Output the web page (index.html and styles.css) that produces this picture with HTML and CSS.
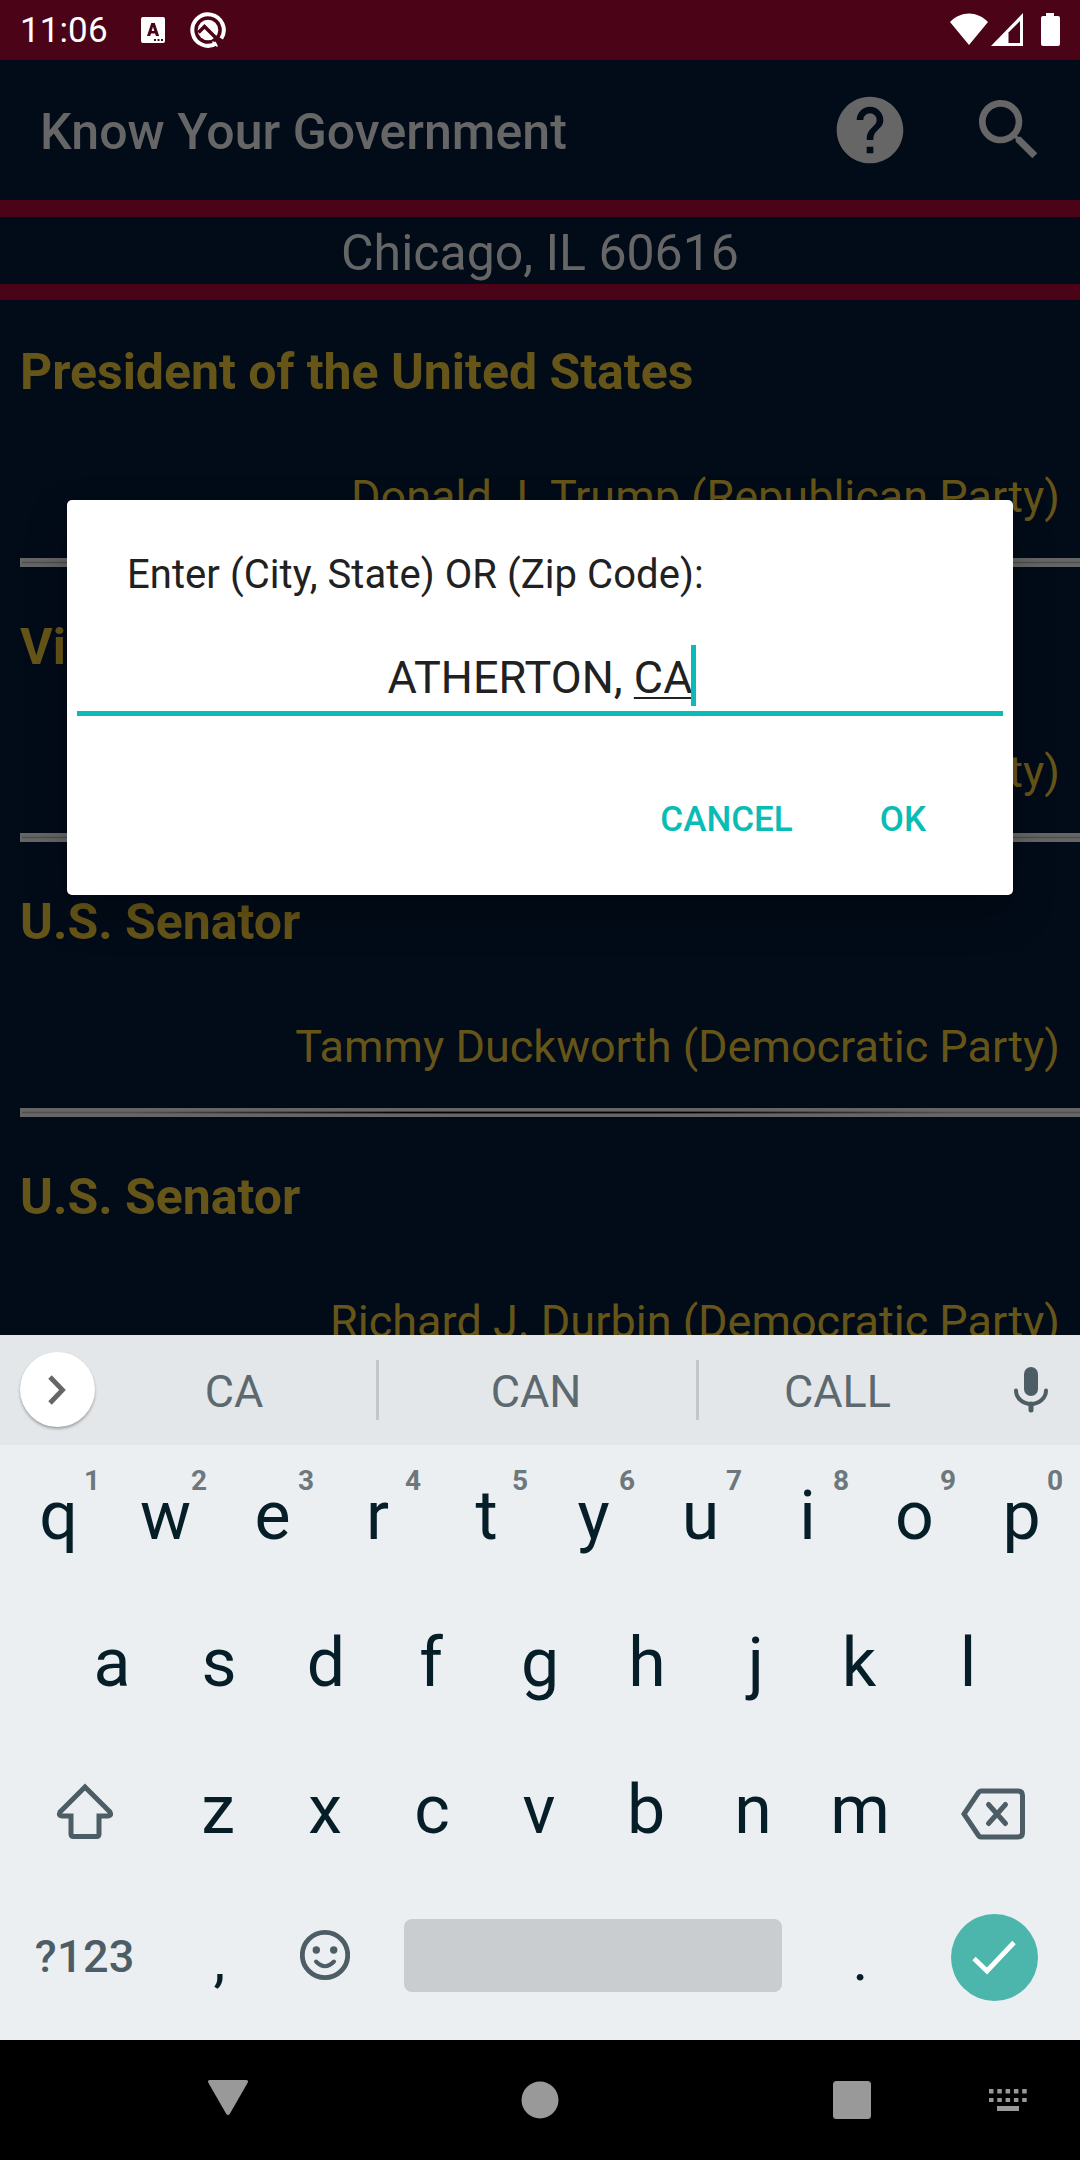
FILE: index.html
```html
<!DOCTYPE html>
<html lang="en">
<head>
<meta charset="utf-8">
<title>Know Your Government</title>
<link rel="stylesheet" href="styles.css">
</head>
<body>
<div class="screen">
  <header class="status">
    <span class="clock">11:06</span>
    <svg class="ic-lang" width="24" height="26" viewBox="0 0 24 26"><path fill-rule="evenodd" fill="#fff" d="M2 0h20a2 2 0 0 1 2 2v22a2 2 0 0 1-2 2H2a2 2 0 0 1-2-2V2a2 2 0 0 1 2-2zM10.300 6L6 19h3.200l.8-2.600h4.100l.8 2.600h3.200L13.800 6zM12 9.800l1.300 4.200h-2.600zM13 22v2h2v-2zM16.500 22v2h2v-2zM20 22v2h2v-2z"/></svg>
    <svg class="ic-q" width="36" height="38" viewBox="0 0 36 38" fill="none"><path d="M26.500 32.300A15.700 15.700 0 1 1 31.300 27.500" stroke="#fff" stroke-width="4"/><circle cx="18" cy="19" r="10.300" fill="#fff"/><path d="M8.500 21.500l6-6L30 31" stroke="#4b0417" stroke-width="3.500"/><path d="M22.500 30.500l5 5" stroke="#fff" stroke-width="1.500"/></svg>
    <svg class="ic-net" width="112" height="34" viewBox="0 0 112 34"><path fill="#fff" d="M0 9C11-2.500 27-2.500 38 9L19 32zM41 33L73 0v33z"/><path d="M58.500 19.500L70 8v22H58.500z" fill="#4b0417"/><path fill="#fff" d="M96 0h8v3h4a2 2 0 0 1 2 2v26a2 2 0 0 1-2 2H93a2 2 0 0 1-2-2V5a2 2 0 0 1 2-2h3z"/></svg>
  </header>
  <main class="app">
    <div class="appbar">
      <h1>Know Your Government</h1>
      <svg class="ic-help" width="80" height="80" viewBox="0 0 24 24" fill="#666"><path d="M12 2C6.480 2 2 6.480 2 12s4.480 10 10 10 10-4.480 10-10S17.520 2 12 2zm1 17h-2v-2h2v2zm2.070-7.750l-.9.920C13.450 12.900 13 13.500 13 15h-2v-.5c0-1.100.45-2.100 1.170-2.830l1.240-1.260c.37-.36.59-.86.59-1.410 0-1.100-.9-2-2-2s-2 .9-2 2H8c0-2.210 1.790-4 4-4s4 1.790 4 4c0 .88-.36 1.680-.93 2.250z"/></svg>
      <svg class="ic-search" width="80" height="80" viewBox="0 0 24 24" fill="#666"><path d="M15.500 14h-.79l-.28-.27C15.410 12.590 16 11.110 16 9.500 16 5.910 13.090 3 9.500 3S3 5.910 3 9.500 5.910 16 9.500 16c1.610 0 3.090-.59 4.230-1.570l.27.28v.79l5 4.990L20.490 19l-4.990-5zm-6 0C7.010 14 5 11.990 5 9.500S7.010 5 9.500 5 14 7.010 14 9.500 11.990 14 9.500 14z"/></svg>
    </div>
    <div class="place">Chicago, IL 60616</div>
    <ul class="officials">
      <li><b>President of the United States</b><span>Donald J. Trump (Republican Party)</span><i class="rule"></i></li>
      <li><b>Vice President of the United States</b><span>Mike Pence (Republican Party)</span><i class="rule"></i></li>
      <li><b>U.S. Senator</b><span>Tammy Duckworth (Democratic Party)</span><i class="rule"></i></li>
      <li><b>U.S. Senator</b><span>Richard J. Durbin (Democratic Party)</span><i class="rule"></i></li>
    </ul>
  </main>
  <section class="dialog">
    <p class="message">Enter (City, State) OR (Zip Code):</p>
    <div class="field"><span class="value">ATHERTON, <span class="composing">CA</span></span><i class="caret"></i></div>
    <div class="actions"><span>CANCEL</span><span>OK</span></div>
  </section>
  <section class="keyboard">
    <div class="suggest">
      <div class="more"><svg width="20" height="30" viewBox="0 0 20 30"><path d="M2 2l12.500 13L2 28" fill="none" stroke="#666" stroke-width="4.800"/></svg></div>
      <span class="s1">CA</span><i></i><span class="s2">CAN</span><i></i><span class="s3">CALL</span>
      <svg class="ic-mic" width="34" height="46" viewBox="0 0 34 46"><rect x="10" y="0" width="14" height="29" rx="7" fill="#4d5d65"/><path d="M2 23.500a15 13.500 0 0 0 30 0" fill="none" stroke="#4d5d65" stroke-width="4" stroke-linecap="round"/><path d="M17 37v6" fill="none" stroke="#4d5d65" stroke-width="5" stroke-linecap="round"/></svg>
    </div>
    <div class="keys">
      <div class="row"><span>q<sup>1</sup></span><span>w<sup>2</sup></span><span>e<sup>3</sup></span><span class="narrow">r<sup>4</sup></span><span>t<sup>5</sup></span><span>y<sup>6</sup></span><span>u<sup>7</sup></span><span>i<sup>8</sup></span><span>o<sup>9</sup></span><span>p<sup>0</sup></span></div>
      <div class="row"><span>a</span><span>s</span><span>d</span><span class="narrow">f</span><span>g</span><span>h</span><span class="hook">j</span><span class="narrow">k</span><span>l</span></div>
      <div class="row third">
        <span class="wide shift"><svg width="58" height="58" viewBox="0 0 58 58"><path d="M29 5L4 30q-2 4 2 4h9v18q0 2.500 2.500 2.500h23q2.500 0 2.500-2.500V34h9q4 0 2-4z" fill="none" stroke="#4d5d65" stroke-width="5"/></svg></span>
        <span>z</span><span>x</span><span>c</span><span>v</span><span>b</span><span>n</span><span>m</span>
        <span class="wide delete"><svg width="64" height="52" viewBox="0 0 64 52"><path d="M20 3h37q4.500 0 4.500 4.500v37q0 4.500-4.500 4.500H20q-1.500 0-2.500-1.500L3 26 17.500 4.500Q18.500 3 20 3z" fill="none" stroke="#4d5d65" stroke-width="5"/><path d="M27.500 16.500l17 19M44.500 16.500l-17 19" fill="none" stroke="#4d5d65" stroke-width="5" stroke-linecap="round"/></svg></span>
      </div>
      <div class="row bottom">
        <span class="wide symbols">?123</span><span class="punct">,</span>
        <span class="emoji"><svg width="50" height="52" viewBox="0 0 50 52"><circle cx="25" cy="26" r="22.700" fill="none" stroke="#4d5d65" stroke-width="4.800"/><circle cx="16.300" cy="21" r="3.700" fill="#4d5d65"/><circle cx="33.700" cy="21" r="3.700" fill="#4d5d65"/><path d="M16 32.500q9 9.500 18 0" fill="none" stroke="#4d5d65" stroke-width="4" stroke-linecap="round"/></svg></span>
        <span class="space"></span><span class="punct">.</span>
        <span class="wide go"><span class="enter"><svg width="44" height="36" viewBox="0 0 44 36"><path d="M2 18.500l13 12.500L42 2.500" fill="none" stroke="#fff" stroke-width="4.800"/></svg></span></span>
      </div>
    </div>
  </section>
  <nav class="nav">
    <svg width="1080" height="120" viewBox="0 0 1080 120" fill="#999"><path d="M210 40h36q3 0 1.500 3L230 73.500q-2 3-4 0L208.500 43q-1.500-3 1.500-3z"/><circle cx="540" cy="60" r="18.500"/><rect x="833" y="41" width="38" height="38" rx="3.500"/><path d="M989 49h4.500v4.500H989zm8.300 0h4.500v4.500h-4.500zm8.300 0h4.500v4.500h-4.500zm8.300 0h4.500v4.500h-4.500zm8.300 0h4.500v4.500h-4.500zM989 58h4.500v4H989zm8.300 0h4.500v4h-4.500zm8.300 0h4.500v4h-4.500zm8.300 0h4.500v4h-4.500zm8.300 0h4.500v4h-4.500zM997 66h22v5h-22z"/></svg>
  </nav>
</div>
</body>
</html>
```
FILE: styles.css
```css
* { box-sizing: border-box; }
body { margin: 0; font-family: Roboto, "Liberation Sans", sans-serif; }
svg { display: block; flex: none; }
.screen { position: relative; width: 1080px; height: 2160px; overflow: hidden; background: #020b18; }

.status { height: 60px; background: #4b0417; display: flex; color: #fff; }
.clock { font-size: 35px; line-height: 62px; width: 121px; padding-left: 20px; flex: none; letter-spacing: .1px; }
.status .ic-lang { margin: 17px 25px 0 20px; }
.status .ic-q { margin-top: 11px; }
.status .ic-net { margin: 13px 18px 0 auto; }

.app { height: 1275px; overflow: hidden; }
.appbar { height: 140px; display: flex; align-items: center; padding: 0 31px 0 40px; }
.appbar h1 { margin: 4px auto 0 0; font-size: 50px; line-height: 58px; font-weight: 500; letter-spacing: .05px; color: #666; }
.appbar .ic-search { margin: -1px 0 0 59px; }
.place { height: 100px; border-top: 17px solid #4b0417; border-bottom: 16px solid #4b0417; text-align: center; font-size: 50px; line-height: 73px; color: #666; }

.officials { list-style: none; margin: 0; padding: 0 0 0 20px; color: #665518; }
.officials li { display: flex; flex-direction: column; height: 275px; padding-top: 42px; }
.officials b { font-size: 50px; line-height: 60px; white-space: nowrap; letter-spacing: -.03px; }
.officials span { font-size: 45px; line-height: 54px; margin: 68px 20px 0 0; text-align: right; }
.rule { display: block; height: 9px; margin-top: 34px; flex: none; background: linear-gradient(90deg, #505050 10%, #000 37%, #000 63%, #505050 88%) 2px 4px / 100% 1px no-repeat, linear-gradient(90deg, #606060 10%, #3c3c3c 40%, #3c3c3c 60%, #606060 88%) 2px 3px / 100% 3px no-repeat #666; }

.dialog { position: absolute; left: 67px; top: 500px; width: 946px; height: 395px; background: #fff; border-radius: 5px; padding: 51px 10px 0; box-shadow: 0 18px 40px rgba(0,0,0,.25); color: #212121; }
.message { margin: 0 0 0 50px; font-size: 40px; line-height: 48px; letter-spacing: .06px; }
.field { display: flex; justify-content: center; margin-top: 46px; height: 71px; border-bottom: 5px solid #0abcb5; font-size: 45px; line-height: 61px; }
.value { padding-top: 2px; }
.composing { text-decoration: underline; text-decoration-thickness: 2px; text-underline-offset: 4px; text-decoration-skip-ink: none; }
.caret { width: 5px; height: 61px; margin-left: -2px; margin-right: -3px; background: #0abcb5; }
.actions { display: flex; justify-content: flex-end; gap: 87px; margin-top: 83px; padding-right: 77px; font-size: 35px; line-height: 42px; font-weight: 500; color: #0abcb5; }

.keyboard { height: 705px; background: #eceff1; }
.suggest { height: 110px; background: #e3e7e9; display: flex; align-items: center; color: #5c6a70; font-size: 45px; }
.more { width: 75px; height: 75px; margin: -1px 0 0 20px; border-radius: 50%; background: #fff; display: flex; align-items: center; justify-content: center; box-shadow: 0 2px 3px rgba(0,0,0,.3); }
.suggest i { width: 3px; height: 60px; background: #c2c6c9; }
.suggest span { text-align: center; padding: 3px 3px 0 0; }
.s1 { width: 281px; } .s2 { width: 317px; } .s3 { width: 280px; }
.ic-mic { margin: -1px 0 0 35px; }
.keys { padding: 0 5px; color: #061e28; font-size: 68px; }
.row { display: flex; justify-content: center; height: 147px; line-height: 141px; }
.row > span { position: relative; width: 107px; height: 147px; padding-bottom: 5px; display: flex; align-items: center; justify-content: center; flex: none; }
.row > .narrow { padding-right: 4px; }
.row > .hook { padding-left: 4px; }
.third > span { padding-right: 2px; }
.row > .wide { width: 160.500px; }
.row > .shift { padding: 0 0 3px; }
.row > .delete { padding: 2px 4px 0 0; }
.row > .emoji { padding: 0 3px 9px 0; }
.row > .punct { font-size: 60px; padding-bottom: 0; }
.row > .go { padding-bottom: 0; }
.row sup { position: absolute; left: 79px; top: 20px; font-size: 28px; line-height: 32px; font-weight: 700; color: #6c787d; }
.row > .symbols { font-size: 45px; font-weight: 500; color: #4d5d65; padding: 0 2px 6px 0; letter-spacing: .3px; }
.row > .space { width: 378px; height: 73px; margin: 33px 25.500px 0 23.500px; background: #c9cdd0; border-radius: 8px; }
.enter { width: 87px; height: 87px; margin-top: -4px; border-radius: 50%; background: #4db6ac; display: flex; align-items: center; justify-content: center; }
.nav { height: 120px; background: #000; }
```
